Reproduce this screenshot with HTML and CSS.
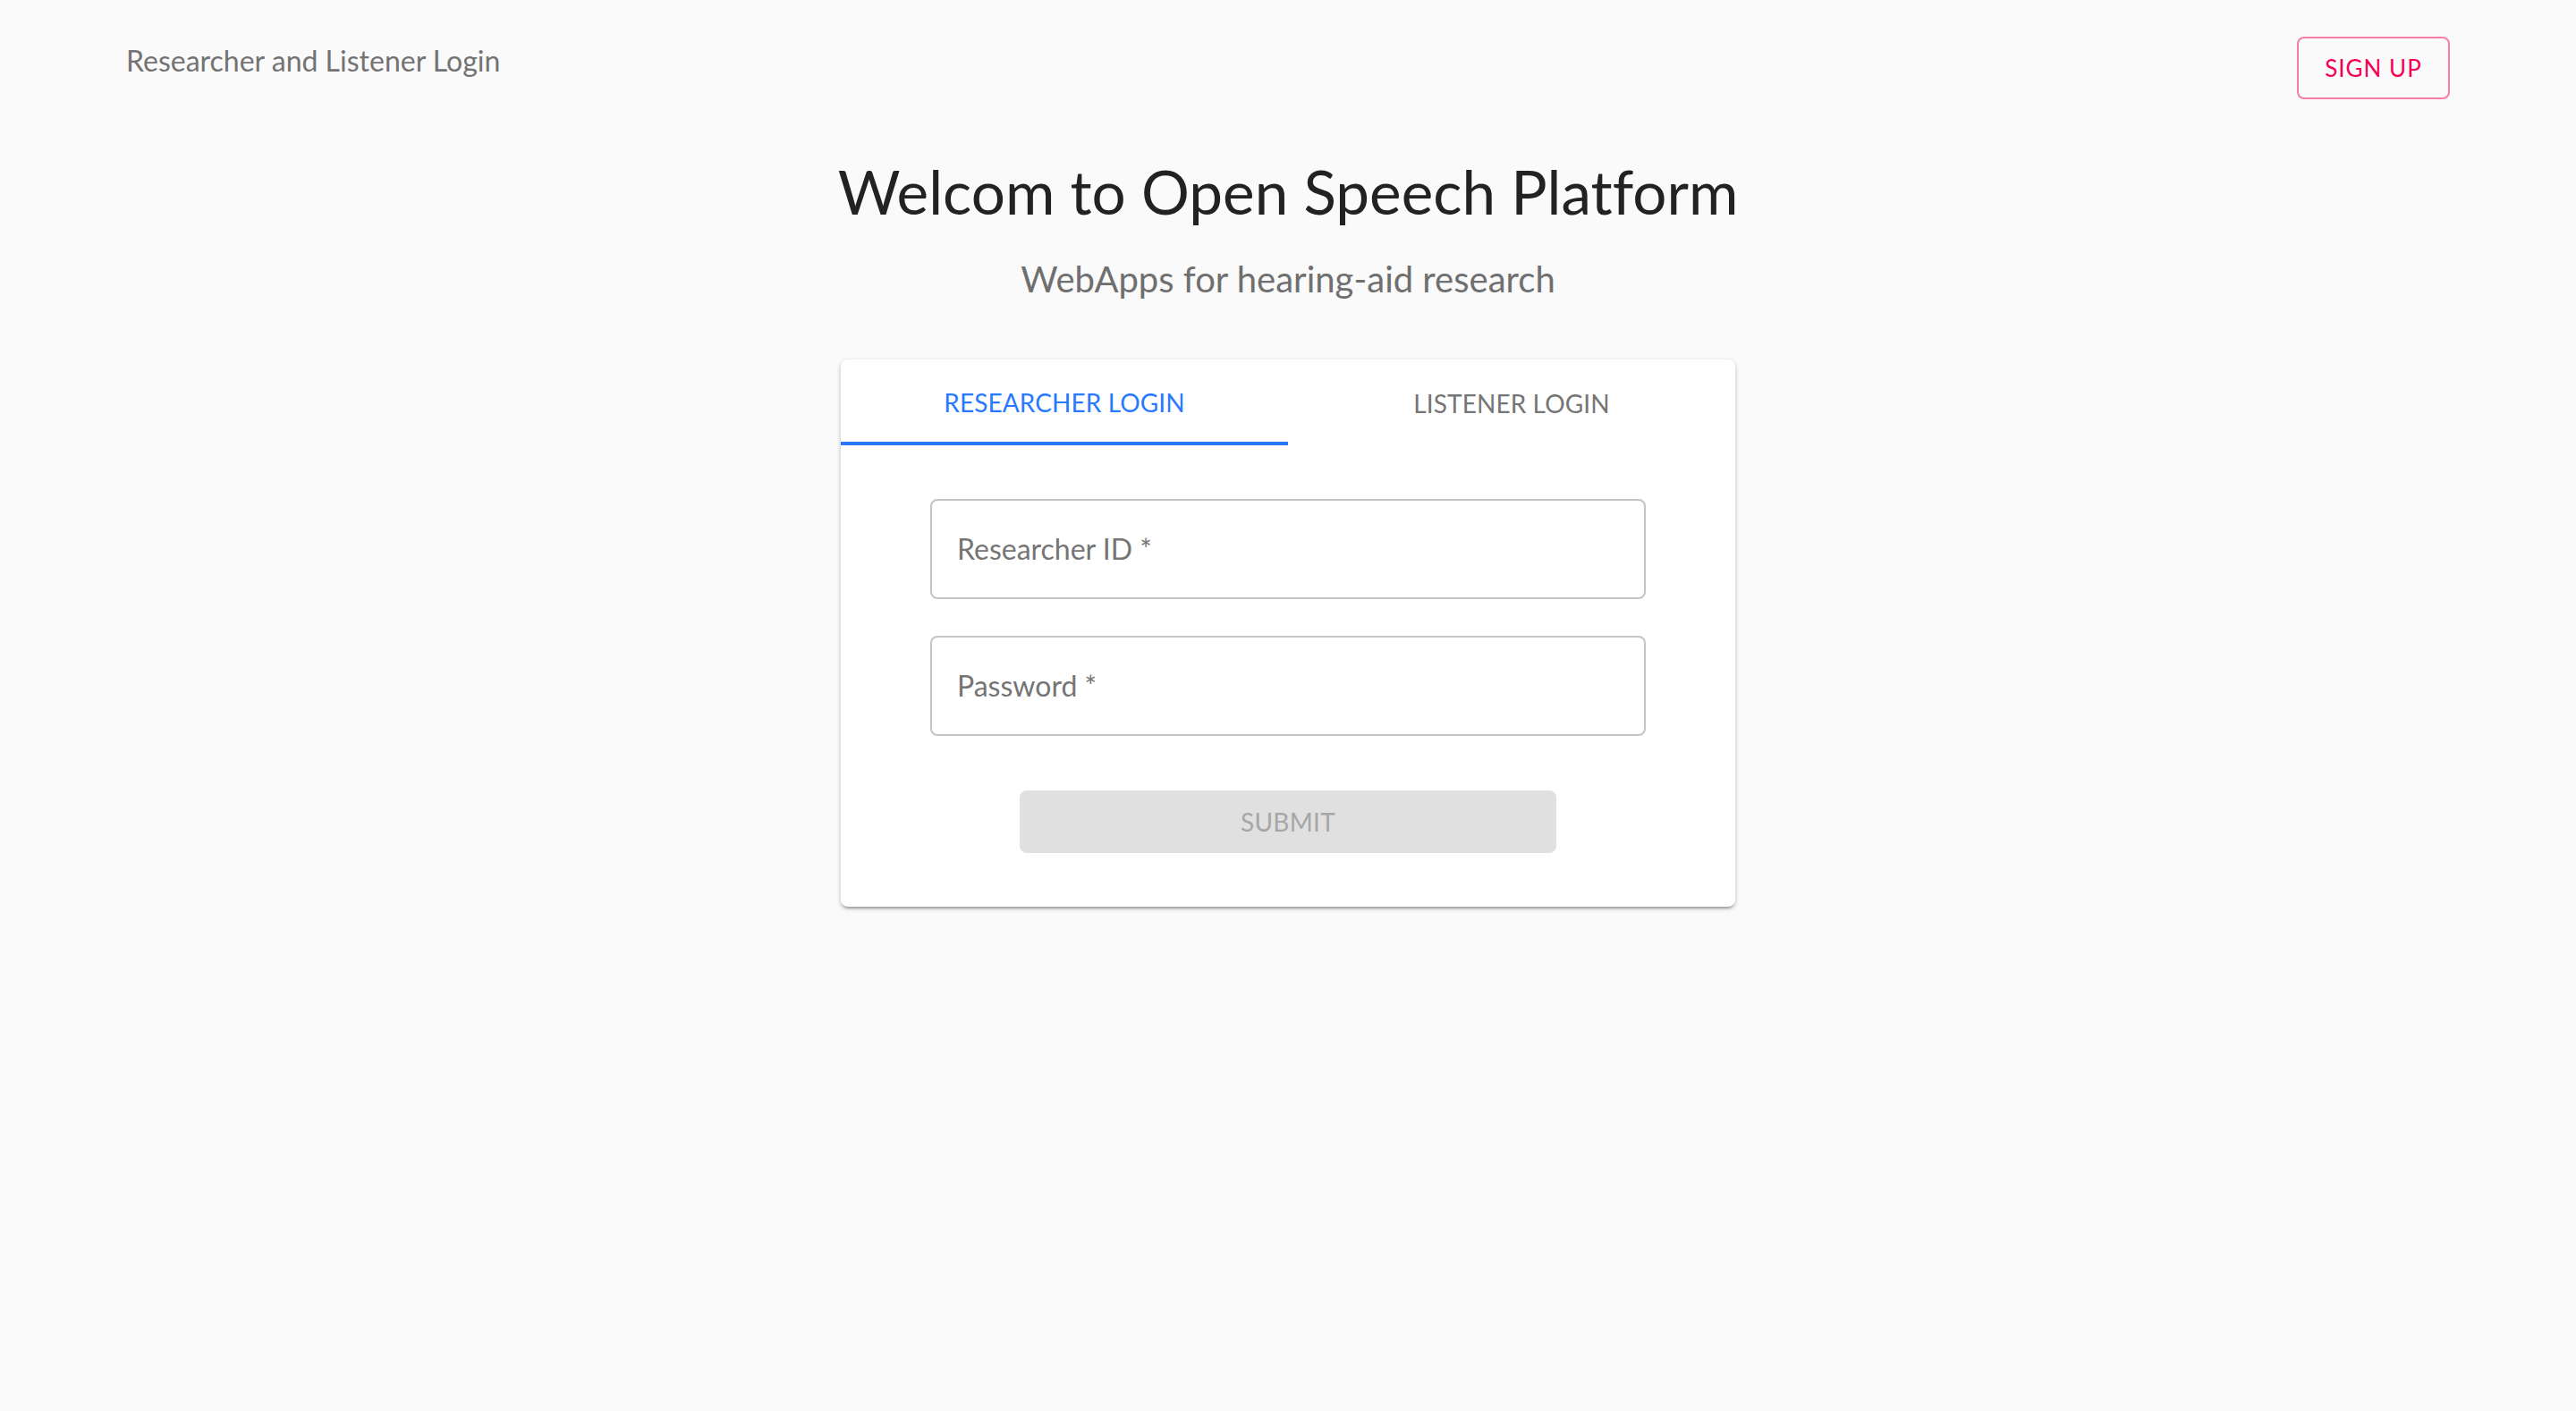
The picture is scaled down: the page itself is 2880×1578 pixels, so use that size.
FILE: index.html
```html
<!DOCTYPE html>
<html lang="en">
<head>
<meta charset="utf-8">
<title>Open Speech Platform</title>
<link rel="stylesheet" href="styles.css">
</head>
<body>
<header class="topbar">
  <div class="app-title">Researcher and Listener Login</div>
  <button class="signup-btn" type="button">SIGN UP</button>
</header>
<main class="main">
  <h1 class="title">Welcom to Open Speech Platform</h1>
  <p class="subtitle">WebApps for hearing-aid research</p>
  <section class="card">
    <nav class="tabs">
      <div class="tab tab-active">RESEARCHER LOGIN</div>
      <div class="tab">LISTENER LOGIN</div>
    </nav>
    <form class="form">
      <label class="field"><span class="field-label">Researcher ID *</span></label>
      <label class="field"><span class="field-label">Password *</span></label>
      <div class="submit-row">
        <button class="submit-btn" type="button" disabled>SUBMIT</button>
      </div>
    </form>
  </section>
</main>
</body>
</html>
```

FILE: styles.css
```css
html, body {
  margin: 0;
  padding: 0;
}
body {
  background: #fafafa;
  font-family: "Lato", "Open Sans", "Liberation Sans", sans-serif;
  font-variant-ligatures: none;
  min-height: 1578px;
}
button {
  font-variant-ligatures: none;
}
.topbar {
  display: flex;
  justify-content: space-between;
  align-items: flex-start;
  padding: 41px 141px 0 141px;
}
.app-title {
  margin-top: 8px;
  font-size: 32px;
  line-height: 38px;
  color: #737373;
}
.signup-btn {
  box-sizing: border-box;
  width: 171px;
  height: 70px;
  border: 2px solid rgba(245, 0, 87, 0.5);
  border-radius: 8px;
  background: transparent;
  color: #f50057;
  font-family: inherit;
  font-size: 26px;
  letter-spacing: 1px;
  display: flex;
  align-items: center;
  justify-content: center;
  padding: 0;
}
.main {
  display: flex;
  flex-direction: column;
  align-items: center;
}
.title {
  margin: 63px 0 0;
  font-size: 67.4px;
  line-height: 80px;
  font-weight: 400;
  color: #222222;
}
.subtitle {
  margin: 34px 0 0;
  font-size: 40px;
  line-height: 48px;
  color: #6f6f6f;
}
.card {
  margin-top: 66px;
  width: 1000px;
  background: #ffffff;
  border-radius: 8px;
  box-shadow: 0 4px 2px -2px rgba(0,0,0,0.2), 0 2px 4px 0 rgba(0,0,0,0.14), 0 2px 6px 0 rgba(0,0,0,0.12);
}
.tabs {
  display: flex;
  height: 96px;
}
.tab {
  flex: 1;
  display: flex;
  align-items: center;
  justify-content: center;
  font-size: 28px;
  letter-spacing: 0.1px;
  color: #757575;
  box-sizing: border-box;
  padding-top: 2px;
}
.tab-active {
  color: #2979ff;
  border-bottom: 4px solid #2979ff;
  padding-top: 4px;
}
.form {
  display: flex;
  flex-direction: column;
  padding: 60px 100px 60px;
}
.field {
  box-sizing: border-box;
  height: 112px;
  border: 2px solid #c4c4c4;
  border-radius: 8px;
  display: flex;
  align-items: center;
  padding: 0 28px 2px;
}
.field + .field {
  margin-top: 41px;
}
.field-label {
  font-size: 32px;
  color: #757575;
}
.submit-row {
  margin-top: 61px;
  display: flex;
  justify-content: center;
}
.submit-btn {
  width: 600px;
  height: 70px;
  border: none;
  border-radius: 8px;
  background: #e0e0e0;
  color: #a6a6a6;
  font-family: inherit;
  font-size: 28px;
  letter-spacing: 0.3px;
  padding: 0;
}
```
